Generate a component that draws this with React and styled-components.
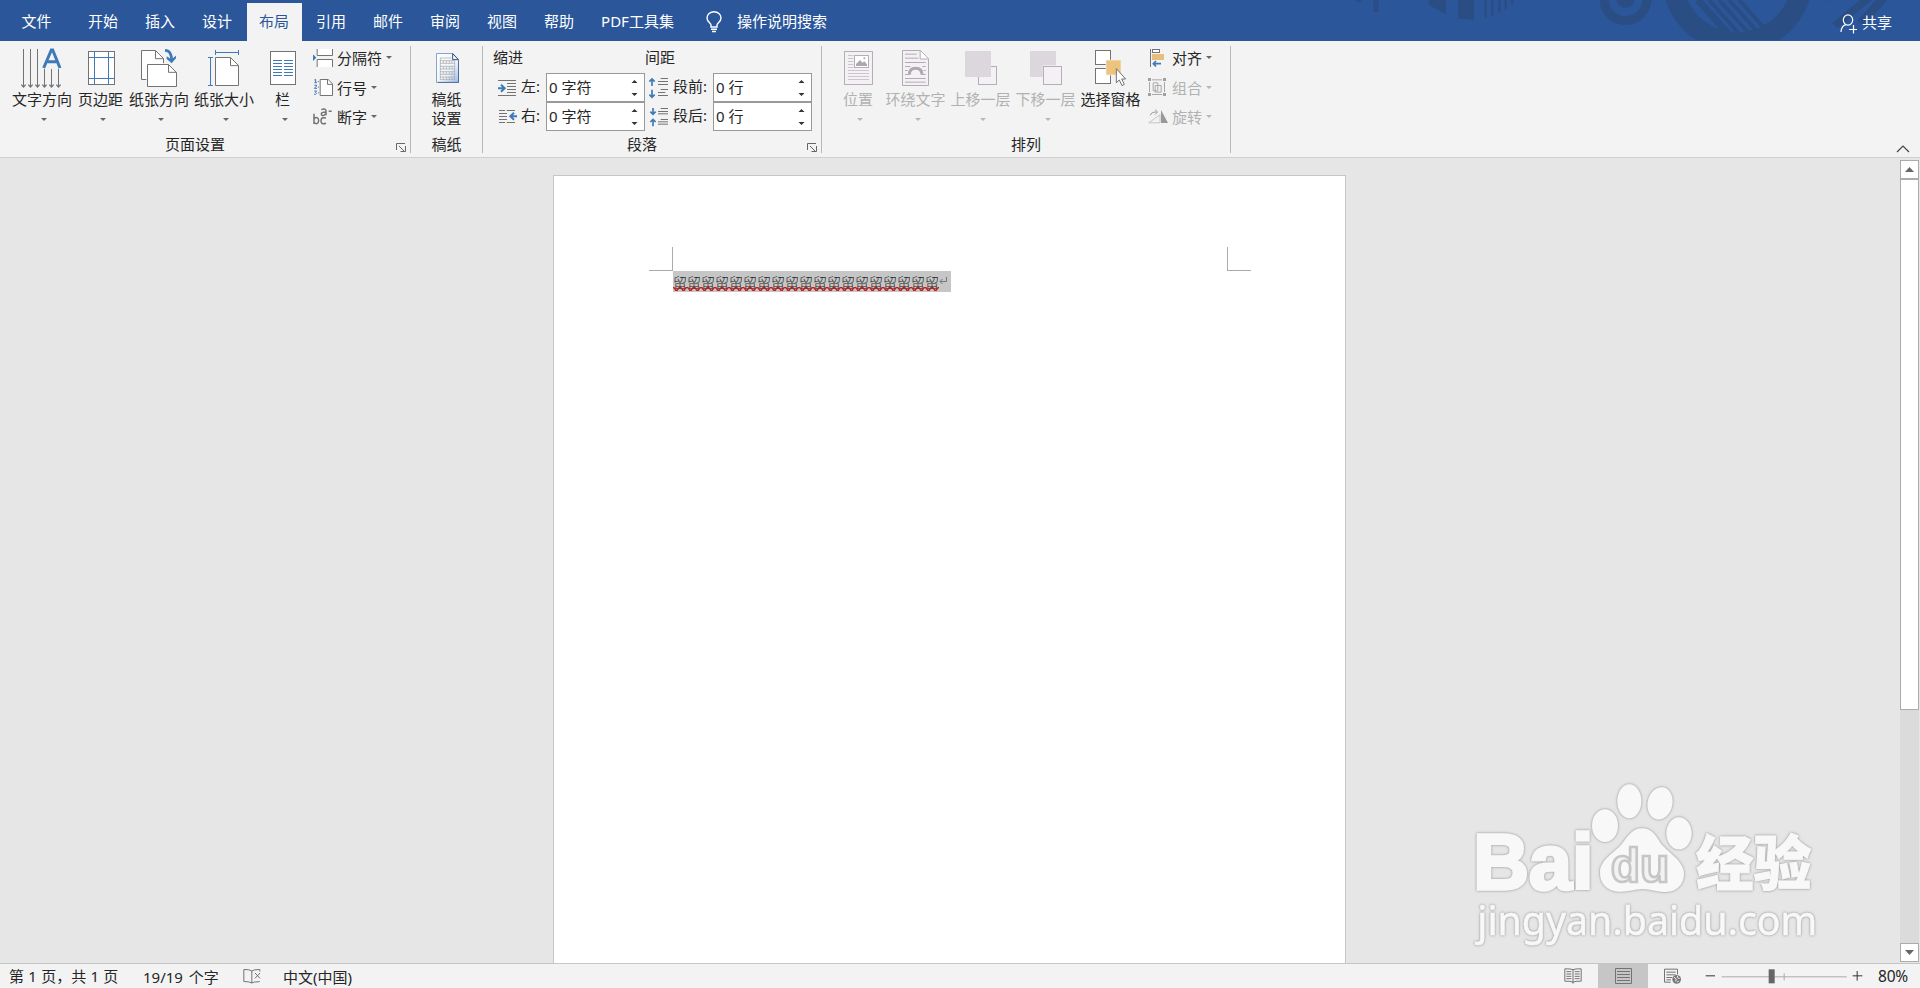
import React from "react";
import styled, { createGlobalStyle, css } from "styled-components";

const Global = createGlobalStyle`
  * { box-sizing: border-box; }
  body {
    margin: 0;
    overflow: hidden;
    font-family: "Noto Sans", "Noto Sans CJK SC", sans-serif;
    font-size: 15px;
    color: #262626;
  }
  svg { display: block; flex: none; }
`;

const Window = styled.div`
  position: relative;
  display: flex;
  flex-direction: column;
  width: 1920px;
  height: 988px;
  background: #e6e6e6;
  overflow: hidden;
`;

/* ---------- title tabs ---------- */
const TabBar = styled.header`
  position: relative;
  display: flex;
  height: 41px;
  flex: none;
  padding-top: 3px;
  background: #2b579a;
  color: #fff;
`;
const Decor = styled.svg`
  position: absolute;
  right: 0;
  top: 0;
`;
const Tab = styled.div`
  width: ${(p) => p.$w || 55}px;
  margin-right: 2px;
  height: 38px;
  line-height: 37px;
  text-align: center;
  white-space: nowrap;
  padding-right: 1px;
  ${(p) => p.$active && css`background: #f3f3f3; color: #2b579a;`}
`;
const FileTab = styled(Tab)`
  width: 74px;
  line-height: 36px;
`;
const TellMe = styled.div`
  display: flex;
  gap: 15px;
  line-height: 37px;
  margin-left: 17px;
  svg { margin-top: 8px; }
`;
const Share = styled.div`
  position: relative;
  display: flex;
  gap: 5px;
  margin-left: auto;
  margin-right: 28px;
  line-height: 38px;
  svg { margin-top: 11px; }
`;

/* ---------- ribbon ---------- */
const Ribbon = styled.section`
  position: relative;
  display: flex;
  height: 117px;
  flex: none;
  padding: 5px 0 4px;
  background: #f3f3f3;
  border-bottom: 1px solid #d0d0d0;
`;
const Group = styled.div`
  position: relative;
  display: flex;
  flex-direction: column;
  justify-content: space-between;
  width: ${(p) => p.$w}px;
  border-right: 1px solid #b8b8b8;
`;
const GroupBody = styled.div`
  display: flex;
  height: 88px;
  padding-left: ${(p) => p.$pad || 0}px;
`;
const Caption = styled.div`
  height: 18px;
  line-height: 18px;
  text-align: center;
  padding-right: ${(p) => p.$shift || 0}px;
`;
const Launcher = styled.svg`
  position: absolute;
  right: 4px;
  bottom: 1px;
`;
const BigButtonBox = styled.div`
  display: flex;
  flex-direction: column;
  align-items: center;
  width: ${(p) => p.$w}px;
  white-space: nowrap;
  color: ${(p) => (p.$off ? "#b1b1b1" : "#262626")};
`;
const IconSlot = styled.div`
  height: 43px;
  padding-top: ${(p) => p.$top}px;
  margin-left: ${(p) => p.$dx || 0}px;
`;
const BigLabel = styled.div`
  line-height: 19px;
  padding-top: 1px;
  text-align: center;
  height: ${(p) => (p.$two ? 39 : 29)}px;
`;
const Caret = styled.i`
  width: 0;
  height: 0;
  flex: none;
  border: 3px solid transparent;
  border-bottom: 0;
  border-top-color: ${(p) => (p.$off ? "#b8b8b8" : "#666")};
  margin-left: 4px;
`;
const SmallColumn = styled.div`
  display: flex;
  flex-direction: column;
  margin-top: -3px;
  padding-left: ${(p) => p.$pad}px;
`;
const SmallButtonBox = styled.div`
  display: flex;
  align-items: center;
  height: 29.400px;
  white-space: nowrap;
  color: ${(p) => (p.$off ? "#b1b1b1" : "#262626")};
`;
const SmallIcon = styled.div`
  width: 24px;
`;
const Collapse = styled.svg`
  position: absolute;
  right: 10px;
  bottom: 4px;
`;

/* ---------- paragraph fields ---------- */
const FieldColumn = styled.div`
  width: ${(p) => p.$w}px;
`;
const FieldHead = styled.div`
  height: 27px;
  line-height: 23px;
`;
const Field = styled.label`
  display: flex;
  align-items: center;
  height: 29px;
  padding-left: 4px;
`;
const FieldName = styled.span`
  width: ${(p) => p.$w}px;
  padding-left: 4px;
  line-height: 27px;
  height: 29px;
  white-space: nowrap;
`;
const Spin = styled.span`
  display: flex;
  justify-content: space-between;
  align-items: center;
  width: 99px;
  height: 29px;
  padding: 0 6px 0 2px;
  border: 1px solid #999;
  background: #fff;
  line-height: 27px;
`;

/* ---------- document ---------- */
const Workspace = styled.main`
  display: flex;
  flex: 1;
  min-height: 0;
`;
const Canvas = styled.div`
  width: 1900px;
  padding: 17px 0 0 553px;
`;
const Page = styled.article`
  width: 793px;
  height: 100%;
  padding: 71px 94px 0 95px;
  border: 1px solid #c6c6c6;
  border-bottom: 0;
  background: #fff;
`;
const Marks = styled.div`
  display: flex;
  justify-content: space-between;
`;
const Mark = styled.div`
  width: 24px;
  height: 24px;
  border-bottom: 1px solid #ababab;
  border-right: ${(p) => (p.$end ? 0 : "1px solid #ababab")};
  border-left: ${(p) => (p.$end ? "1px solid #ababab" : 0)};
`;
const Selection = styled.div`
  position: relative;
  display: flex;
  width: 278px;
  height: 21px;
  margin-left: 24px;
  background: #c6c6c6;
  font-family: "Noto Sans CJK SC", sans-serif;
  font-weight: 300;
  font-size: 14px;
  line-height: 23px;
  white-space: nowrap;
  overflow: hidden;
`;
const Wave = styled.svg`
  position: absolute;
  left: 0;
  top: 16px;
`;
const Return = styled.svg`
  margin: 5px 0 0 0;
`;
const ScrollBar = styled.aside`
  display: flex;
  flex-direction: column;
  width: 19px;
  margin: 2px 1px 1px 0;
  background: #dbdbdb;
`;
const ScrollButton = styled.div`
  display: flex;
  align-items: center;
  justify-content: center;
  height: 19px;
  flex: none;
  border: 1px solid #ababab;
  background: #fff;
`;
const Thumb = styled.div`
  height: 531px;
  border: 1px solid #ababab;
  background: #fff;
  margin-bottom: auto;
`;

/* ---------- status bar ---------- */
const StatusBar = styled.footer`
  display: flex;
  align-items: center;
  height: 25px;
  flex: none;
  border-top: 1px solid #c6c6c6;
  background: #f3f3f3;
  line-height: 24px;
  white-space: nowrap;
`;
const StatusItem = styled.div`
  width: ${(p) => p.$w}px;
  padding-left: ${(p) => p.$pad || 0}px;
  padding-top: ${(p) => p.$down || 0}px;
  word-spacing: ${(p) => p.$gap || 0}px;
`;
const ViewButton = styled.div`
  display: flex;
  align-items: center;
  justify-content: center;
  width: 50px;
  height: 24px;
  background: ${(p) => (p.$active ? "#c6c6c6" : "transparent")};
`;
const Views = styled.div`
  display: flex;
  margin-left: auto;
`;
const ZoomSlider = styled.div`
  margin-left: 5px;
`;
const ZoomValue = styled.div`
  width: 42px;
  margin-left: 13px;
  font-size: 15.500px;
  letter-spacing: -0.200px;
`;
const Watermark = styled.svg`
  position: absolute;
  left: 1465px;
  top: 775px;
`;

/* Icons use three units per pixel. */
const Ico = ({ x, y, w, h, children }) => (
  <svg width={w / 3} height={h / 3} viewBox={`${x} ${y} ${w} ${h}`} fill="none" stroke="#737373" strokeWidth="3">
    {children}
  </svg>
);
const B = "#3f7ab8";

const TextDirectionIcon = () => (
  <Ico x={66} y={144} w={126} h={123}>
    <path d="M73.500 147v111M94.500 147v111M115.500 147v111M136.500 207v51M157.500 207v51M178.500 207v51" />
    <path strokeWidth="4" d="M67 254l6.500 7 6.500-7M88 254l6.500 7 6.500-7M109 254l6.500 7 6.500-7M130 254l6.500 7 6.500-7M151 254l6.500 7 6.500-7M172 254l6.500 7 6.500-7" />
    <path stroke={B} strokeWidth="9" d="M134 204L157 150h4l22 54M142 185h33" />
  </Ico>
);
const MarginsIcon = () => (
  <Ico x={264} y={153} w={81} h={102}>
    <rect x="265.500" y="154.500" width="78" height="99" fill="#fff" />
    <path stroke={B} d="M283.500 156v96M325.500 156v96M267 172.500h75M267 235.500h75" />
  </Ico>
);
const OrientationIcon = () => (
  <Ico x={423} y={144} w={111} h={120}>
    <path fill="#fff" d="M439 238.500h-14.500v-87h42l24 24v14" />
    <path d="M466.500 152v24h24" />
    <path fill="#fff" d="M442.500 193.500h63l24 24v42h-87z" />
    <path d="M505.500 194v23h24" />
    <path stroke={B} strokeWidth="8" d="M495 151c15 0 20 12 20 32" />
    <path fill={B} stroke="none" d="M500 169l14 9 14-11v8l-13 15-15-13z" />
  </Ico>
);
const SizeIcon = () => (
  <Ico x={624} y={150} w={96} h={111}>
    <path stroke={B} d="M646.500 150v15M715.500 150v15M646 157.500h69M624 172.500h15M624 256.500h15M631.500 172v84" />
    <path fill="#fff" d="M646.500 172.500h45l24 24v60h-69z" />
    <path d="M691.500 173v24h24" />
  </Ico>
);
const ColumnsIcon = () => (
  <Ico x={810} y={153} w={78} h={102}>
    <rect x="811.500" y="154.500" width="75" height="99" fill="#fff" />
    <path stroke={B} d="M819 181.500h27m6 0h27M819 190.500h27m6 0h27M819 199.500h27m6 0h27M819 208.500h27m6 0h27M819 217.500h27m6 0h27M819 226.500h27m6 0h27" />
  </Ico>
);
const BreaksIcon = () => (
  <Ico x={939} y={144} w={60} h={60}>
    <path fill="#fff" d="M951.500 147v19.500h46V147M951.500 201v-22.500h46V201" />
    <path fill={B} stroke="none" d="M939 163l10 10-10 10z" />
  </Ico>
);
const LineNumbersIcon = () => (
  <Ico x={939} y={231} w={60} h={57}>
    <path fill="#fff" d="M960.500 235.500h24l13 13v35h-37z" />
    <path d="M982.500 236v14h15" />
    <path stroke={B} d="M943 237l4-2v10M943 245h8M943 253q8-3 7 2l-7 7h8M943 270h7l-4 4q7 3 0 6h-4M955 240v3M955 257v3M955 274v3" />
  </Ico>
);
const HyphenIcon = () => (
  <Ico x={939} y={321} w={60} h={57}>
    <g strokeWidth="4.500">
      <path d="M942 341v31M942 358q3-7 9-5 5 2 5 9t-6 9q-6 0-8-5M978 354q-15-4-15 8 0 13 15 8M964 329q11-5 14 3v14M978 336q-14 0-14 6t8 4l6-5M986 334h9" />
    </g>
  </Ico>
);
const ManuscriptIcon = () => (
  <Ico x={105} y={156} w={75} h={96}>
    <defs>
      <linearGradient id="sheet" x1="0" y1="0" x2="1" y2="1">
        <stop offset="0" stopColor="#fff" />
        <stop offset=".6" stopColor="#eef4fc" />
        <stop offset="1" stopColor="#9dbdec" />
      </linearGradient>
    </defs>
    <path fill="url(#sheet)" stroke="#8ba3c7" d="M109.500 160.500h49l17 18v69h-66z" />
    <path stroke="#4c6c9c" d="M175.500 181v66h-62" />
    <path fill="#fff" stroke="#2c4c80" d="M158 161v18h17z" />
    <path stroke="#a4a4a4" strokeWidth="2" d="M120 174h34M120 182h45M120 190h45M120 199h45M120 207h45M120 215h45M120 223h45M120 231h45M120 239h45M121 174v65M164 182v57" />
    <path stroke="#a4a4a4" strokeWidth="2" d="M130 182v8m9-8v8m9-8v8m8-8v8M130 199v8m9-8v8m9-8v8m8-8v8M130 215v8m9-8v8m9-8v8m8-8v8M130 231v8m9-8v8m9-8v8m8-8v8" />
  </Ico>
);
const IndentLeftIcon = () => (
  <Ico x={291} y={234} w={60} h={54}>
    <path d="M294 238.500h54M321 247.500h27M321 256.500h27M321 265.500h27M321 274.500h27M294 283.500h54" />
    <path stroke={B} strokeWidth="6" d="M294 261.500h20M303 251l11 10.500-11 10.500" />
  </Ico>
);
const IndentRightIcon = () => (
  <Ico x={291} y={321} w={60} h={54}>
    <path d="M297 328.500h18m5 0h25M297 337.500h24M297 346.500h24M297 355.500h24M297 364.500h18m5 0h25" />
    <path stroke={B} strokeWidth="6" d="M351 345.500h-20M342 335l-11 10.500 11 10.500" />
  </Ico>
);
const SpaceBeforeIcon = () => (
  <Ico x={747} y={228} w={60} h={66}>
    <path d="M782 232.500h22M774 241.500h30M774 250.500h30M782 265.500h22M774 274.500h22M774 283.500h30" />
    <path stroke={B} strokeWidth="5" d="M756 255v-20M748 242l8-8 8 8M756 266v22M748 281l8 8 8-8" />
  </Ico>
);
const SpaceAfterIcon = () => (
  <Ico x={747} y={318} w={60} h={60}>
    <path d="M782 322.500h22M774 331.500h30M774 338.500h30M782 355.500h22M774 362.500h30M774 369.500h30" />
    <path stroke={B} strokeWidth="5" d="M759 321v18M751 332l8 8 8-8M759 376v-19M751 363l8-8 8 8" />
  </Ico>
);
const PositionIcon = () => (
  <Ico x={72} y={153} w={87} h={102}>
    <g stroke="#b3b0b3">
      <rect x="73.500" y="154.500" width="84" height="99" fill="#f5f0f5" />
      <path stroke="#cbc8cb" d="M84 166.500h16M84 175.500h16M84 184.500h16M84 193.500h16M84 202.500h16M84 211.500h63M84 220.500h63M84 229.500h63M84 238.500h63" />
      <rect x="103.500" y="166.500" width="42" height="36" fill="#fff" />
      <path fill="#aaa" stroke="none" d="M108 198v-6l12-12 8 8 5-4 8 9v5z" />
      <circle cx="133" cy="175" r="3" fill="#aaa" stroke="none" />
    </g>
  </Ico>
);
const WrapIcon = () => (
  <Ico x={249} y={150} w={81} h={108}>
    <g stroke="#b0adb0">
      <path fill="#f5f0f5" d="M250.500 151.500h54l24 24v81h-78z" />
      <path fill="#fff" d="M303.500 152v25h25" />
      <path d="M258 162.500h35M258 174.500h40M258 187.500h62M258 199.500h16m36 0h10M258 211.500h8m48 0h6M258 223.500h10m42 0h10M258 235.500h62M258 246.500h62" />
      <path strokeWidth="9" stroke="#aaa" d="M271 224q0-19 19-19t19 19" />
    </g>
  </Ico>
);
const ForwardIcon = () => (
  <Ico x={435} y={153} w={96} h={102}>
    <rect x="475.500" y="199.500" width="54" height="54" fill="#f5f0f5" stroke="#b3b0b3" />
    <rect x="435" y="153" width="78" height="78" fill="#dcd7dc" stroke="none" />
  </Ico>
);
const BackwardIcon = () => (
  <Ico x={630} y={153} w={96} h={102}>
    <rect x="630" y="153" width="78" height="78" fill="#dcd7dc" stroke="none" />
    <rect x="668" y="196" width="58" height="58" fill="#f3f3f3" stroke="none" />
    <rect x="670.500" y="199.500" width="54" height="54" fill="#f5f0f5" stroke="#b3b0b3" />
  </Ico>
);
const SelectionPaneIcon = () => (
  <Ico x={825} y={150} w={96} h={111}>
    <rect x="826.500" y="151.500" width="45" height="42" fill="#fff" />
    <rect x="826.500" y="205.500" width="45" height="45" fill="#fff" />
    <rect x="858" y="180" width="45" height="45" fill="#ecc47c" stroke="#f3f3f3" strokeWidth="2" />
    <path fill="#fff" strokeWidth="3" d="M889 206v42l9-8 8 17 7-4-8-16h12z" />
  </Ico>
);
const AlignIcon = () => (
  <Ico x={987} y={144} w={54} h={60}>
    <path d="M994.500 147v54" />
    <rect x="1000.500" y="148.500" width="21" height="9" fill="#fff" />
    <rect x="999" y="162" width="36" height="18" fill="#e9bd7c" stroke="none" />
    <path stroke={B} strokeWidth="5" d="M1026 191h-22M1011 183l-8 8 8 8" />
  </Ico>
);
const GroupIcon = () => (
  <Ico x={987} y={231} w={57} h={60}>
    <g stroke="#a8a8a8">
      <path d="M999 239.500h30M999 283.500h30M991.500 246v30M1036.500 246v30" />
      <path d="M1002.500 248.500h14v24h-14zM1008.500 256.500h18v20h-18z" />
      <path fill="#a0a0a0" stroke="none" d="M987 234h9v9h-9zM1032 234h9v9h-9zM987 279h9v9h-9zM1032 279h9v9h-9z" />
    </g>
  </Ico>
);
const RotateIcon = () => (
  <Ico x={984} y={321} w={60} h={57}>
    <g stroke="#b0b0b0">
      <path d="M986 368.500h34v-24z" fill="#f5f0f5" stroke="#c8c4c8" />
      <path fill="#999" stroke="none" d="M1023 330v39h21z" />
      <path d="M991 346q2-10 18-10M1005 329l8 7-8 8" stroke="#999" />
    </g>
  </Ico>
);
const DialogLauncher = () => (
  <Launcher width="10" height="9" viewBox="0 0 10 9" fill="none" stroke="#666">
    <path d="M.5 7V.5H9M3 3l5 5M9.500 3v5.500H4.500" />
  </Launcher>
);
const SpinArrows = () => (
  <svg width="7" height="18" viewBox="0 0 7 18" fill="#333">
    <path d="M.5 4L3.500 1l3 3zM.5 14h6l-3 3z" />
  </svg>
);

const BigButton = ({ w, icon, top = 4, dx, label, caret = true, off, two }) => (
  <BigButtonBox $w={w} $off={off}>
    <IconSlot $top={top} $dx={dx}>{icon}</IconSlot>
    <BigLabel $two={two}>{label}</BigLabel>
    {caret && <Caret $off={off} />}
  </BigButtonBox>
);
const SmallButton = ({ icon, label, off }) => (
  <SmallButtonBox $off={off}>
    <SmallIcon>{icon}</SmallIcon>
    {label}
    <Caret $off={off} />
  </SmallButtonBox>
);
const SpinField = ({ icon, name, nameW, value }) => (
  <Field>
    {icon}
    <FieldName $w={nameW}>{name}</FieldName>
    <Spin>
      {value}
      <SpinArrows />
    </Spin>
  </Field>
);

const HeaderArt = () => (
  <Decor width="600" height="41" viewBox="1320 0 600 41" fill="#2a4d84">
    <defs>
      <clipPath id="disc"><circle cx="1737.500" cy="-23" r="55" /></clipPath>
      <clipPath id="strip"><rect x="1320" y="0" width="600" height="40" /></clipPath>
    </defs>
    <g clipPath="url(#strip)">
      <path d="M1356 0h5v2h-5zM1373.500 0h5v12h-5zM1429 0h17v14.500L1429 5zM1458 0h16v20l-16-1.500zM1484.500 0h2.500v17.500l-2.500.5zM1491 0h2.500v15.500l-2.500.5zM1498 0h2.500v12l-2.500 1zM1504.500 0h2.500v9l-2.500 1.500zM1511 0h2.500v4l-2.500 1.500z" />
      <circle cx="1625.500" cy="-1" r="26" />
      <circle cx="1625.500" cy="-1" r="17" fill="#2b579a" />
      <circle cx="1625.500" cy="-1" r="9" />
      <circle cx="1737.500" cy="-23" r="75.500" />
      <circle cx="1737.500" cy="-23" r="55" fill="#2b579a" />
      <g clipPath="url(#disc)" stroke="#2a4d84" strokeWidth="4">
        <path strokeWidth="7" d="M1698 0l34 38" />
        <path d="M1709 0l34 38M1719 0l34 38M1729 0l34 38M1739 0l34 38" />
      </g>
      <path d="M1860 0h12l-34 28-6-5zM1876 0h11l-22 26-8-5zM1827 0h4l-2 1z" />
    </g>
  </Decor>
);

const BaiduMark = () => (
  <Watermark width="365" height="185" viewBox="75 45 1095 555">
    <defs>
      <filter id="edge" x="-5%" y="-5%" width="110%" height="110%">
        <feDropShadow dx="0" dy="0" stdDeviation="3.500" floodColor="#9c9c9c" floodOpacity="1" />
        <feDropShadow dx="0" dy="0" stdDeviation="3" floodColor="#b8b8b8" floodOpacity=".6" />
      </filter>
    </defs>
    <g fill="#f8f8f8" filter="url(#edge)">
      <text x="100" y="388" fontFamily="Liberation Sans, sans-serif" fontWeight="700" fontSize="234" textLength="360" lengthAdjust="spacingAndGlyphs" stroke="#f8f8f8" strokeWidth="10">Bai</text>
      <ellipse cx="495" cy="197" rx="39" ry="49" />
      <ellipse cx="568" cy="124" rx="36" ry="51" />
      <ellipse cx="660" cy="130" rx="37" ry="49" transform="rotate(12 660 130)" />
      <ellipse cx="717" cy="220" rx="38" ry="48" />
      <path d="M606 205c28 0 40 19 55 43 16 24 72 54 71 93 0 36-27 56-60 55-22-1-43-10-66-9-24 1-42 9-68 8-37-1-59-24-58-59 1-38 43-57 66-85 19-24 32-46 60-46z" />
      <text x="768" y="374" fontFamily="Noto Sans CJK SC, sans-serif" fontWeight="900" fontSize="178" textLength="346" lengthAdjust="spacingAndGlyphs" stroke="#f8f8f8" strokeWidth="3">经验</text>
      <text x="112" y="526" fontFamily="Noto Sans, sans-serif" fontSize="119" textLength="1020" lengthAdjust="spacingAndGlyphs" stroke="#f8f8f8" strokeWidth="1.500">jingyan.baidu.com</text>
    </g>
    <text x="512" y="365" fontFamily="Liberation Sans, sans-serif" fontWeight="700" fontSize="144" textLength="176" lengthAdjust="spacingAndGlyphs" fill="#f2f2f2" stroke="#c6c6c6" strokeWidth="8">du</text>
  </Watermark>
);

export default function App() {
  return (
    <Window>
      <Global />
      <TabBar>
        <HeaderArt />
        <FileTab>文件</FileTab>
        <Tab>开始</Tab>
        <Tab>插入</Tab>
        <Tab>设计</Tab>
        <Tab $active>布局</Tab>
        <Tab>引用</Tab>
        <Tab>邮件</Tab>
        <Tab>审阅</Tab>
        <Tab>视图</Tab>
        <Tab>帮助</Tab>
        <Tab $w={98}>PDF工具集</Tab>
        <TellMe>
          <svg width="16" height="22" viewBox="0 0 16 22" fill="none" stroke="#fff" strokeWidth="1.400">
            <path d="M5 16v-2C5 12 1 11 1 7a7 6.300 0 0 1 14 0c0 4-4 5-4 7v2zM5 18.300h6M6 20.500h4" />
          </svg>
          操作说明搜索
        </TellMe>
        <Share>
          <svg width="17" height="20" viewBox="0 0 17 20" fill="none" stroke="#fff" strokeWidth="1.200">
            <ellipse cx="8" cy="6" rx="4.700" ry="5.200" />
            <path d="M1 18c.2-4 2-6.500 5-7.300M9 15.500h8M13.500 11v8.500" />
          </svg>
          共享
        </Share>
      </TabBar>

      <Ribbon>
        <Group $w={411}>
          <GroupBody $pad={9}>
            <BigButton w={66} top={2} icon={<TextDirectionIcon />} label="文字方向" />
            <BigButton w={51} top={5} dx={2} icon={<MarginsIcon />} label="页边距" />
            <BigButton w={66} top={2} icon={<OrientationIcon />} label="纸张方向" />
            <BigButton w={64} top={4} icon={<SizeIcon />} label="纸张大小" />
            <BigButton w={53} top={5} icon={<ColumnsIcon />} label="栏" />
            <SmallColumn $pad={4}>
              <SmallButton icon={<BreaksIcon />} label="分隔符" />
              <SmallButton icon={<LineNumbersIcon />} label="行号" />
              <SmallButton icon={<HyphenIcon />} label="断字" />
            </SmallColumn>
          </GroupBody>
          <Caption $shift={20}>页面设置</Caption>
          <DialogLauncher />
        </Group>

        <Group $w={72}>
          <GroupBody>
            <BigButton w={72} top={6} dx={2} two caret={false} icon={<ManuscriptIcon />} label={<>稿纸<br />设置</>} />
          </GroupBody>
          <Caption>稿纸</Caption>
        </Group>

        <Group $w={339}>
          <GroupBody $pad={10}>
            <FieldColumn $w={152}>
              <FieldHead>缩进</FieldHead>
              <SpinField icon={<IndentLeftIcon />} name="左:" nameW={29} value="0 字符" />
              <SpinField icon={<IndentRightIcon />} name="右:" nameW={29} value="0 字符" />
            </FieldColumn>
            <FieldColumn $w={170}>
              <FieldHead>间距</FieldHead>
              <SpinField icon={<SpaceBeforeIcon />} name="段前:" nameW={44} value="0 行" />
              <SpinField icon={<SpaceAfterIcon />} name="段后:" nameW={44} value="0 行" />
            </FieldColumn>
          </GroupBody>
          <Caption $shift={20}>段落</Caption>
          <DialogLauncher />
        </Group>

        <Group $w={409}>
          <GroupBody $pad={11}>
            <BigButton off w={50} top={5} icon={<PositionIcon />} label="位置" />
            <BigButton off w={65} top={4} icon={<WrapIcon />} label="环绕文字" />
            <BigButton off w={65} top={5} icon={<ForwardIcon />} label="上移一层" />
            <BigButton off w={65} top={5} icon={<BackwardIcon />} label="下移一层" />
            <BigButton w={65} top={4} caret={false} icon={<SelectionPaneIcon />} label="选择窗格" />
            <SmallColumn $pad={5}>
              <SmallButton icon={<AlignIcon />} label="对齐" />
              <SmallButton off icon={<GroupIcon />} label="组合" />
              <SmallButton off icon={<RotateIcon />} label="旋转" />
            </SmallColumn>
          </GroupBody>
          <Caption>排列</Caption>
        </Group>
        <Collapse width="14" height="8" viewBox="0 0 14 8" fill="none" stroke="#444" strokeWidth="1.200">
          <path d="M1 7l6-6 6 6" />
        </Collapse>
      </Ribbon>

      <Workspace>
        <Canvas>
          <Page>
            <Marks>
              <Mark />
              <Mark $end />
            </Marks>
            <Selection>
              {"留".repeat(19)}
              <Return width="9" height="10" viewBox="0 0 9 10" fill="none" stroke="#777">
                <path d="M7.500 1v4.500H1M3.500 3L1 5.500 3.500 8" />
              </Return>
              <Wave width="268" height="4" viewBox="0 0 268 4" fill="none" stroke="#cc1414" strokeWidth="1.300">
                <path d={"M0 .5" + "q1.500 0 2 1.500t1.500 1.500 1.500-1.500 2-1.500".repeat(38)} />
              </Wave>
            </Selection>
          </Page>
        </Canvas>
        <ScrollBar>
          <ScrollButton>
            <svg width="9" height="5" viewBox="0 0 9 5" fill="#666"><path d="M0 5l4.500-5L9 5z" /></svg>
          </ScrollButton>
          <Thumb />
          <ScrollButton>
            <svg width="9" height="5" viewBox="0 0 9 5" fill="#666"><path d="M0 0l4.500 5L9 0z" /></svg>
          </ScrollButton>
        </ScrollBar>
      </Workspace>

      <StatusBar>
        <StatusItem $w={143} $pad={9} $gap={0.4}>第 1 页，共 1 页</StatusItem>
        <StatusItem $w={100} $down={2} $gap={2}>19/19 个字</StatusItem>
        <StatusItem $w={40}>
          <Ico x={727} y={55} w={57} h={48}>
            <path d="M753.500 64q-6-5-24-4.500v36q18 0 24 4.500zM753.500 64q6-5 24-4.500v6M777 96q-18 0-24 4M763 70l15 16M778 70l-15 16" />
          </Ico>
        </StatusItem>
        <StatusItem $w={100} $down={2}>中文(中国)</StatusItem>
        <Views>
          <ViewButton>
            <Ico x={74} y={56} w={54} h={48}>
              <path d="M101 61q-6-3-24.500-2.500v37q18-.5 24.500 3 6-3.500 24.500-3v-37Q107 58 101 61zv42M81 67h15M81 74h15M81 81h15M81 88h15M106 67h15M106 74h15M106 81h15M106 88h15" />
            </Ico>
          </ViewButton>
          <ViewButton $active>
            <Ico x={225} y={57} w={51} h={48}>
              <path d="M226.500 58.500h48v45h-48zM231 67.500h39M231 76.500h39M231 85.500h39M231 94.500h39" />
            </Ico>
          </ViewButton>
          <ViewButton>
            <Ico x={378} y={57} w={54} h={48}>
              <path d="M398 99.500h-18.500v-39h39v16M385 69.500h28M385 77.500h28M385 85.500h18M385 92.500h14" />
              <circle cx="416" cy="91" r="13" fill="#777" stroke="none" />
              <path stroke="#eee" d="M407 84l8 6-2 8M419 80l-1 6 7 3M422 97l-5 2" />
            </Ico>
          </ViewButton>
        </Views>
        <ZoomSlider>
          <Ico x={490} y={56} w={486} h={48}>
            <path stroke="#333" d="M498 79.500h28M939 79.500h29M952.500 65v29" />
            <path stroke="#ababab" d="M546 82.500h375M733.500 72v21" />
            <rect x="687" y="60" width="18" height="42" fill="#666" stroke="none" />
          </Ico>
        </ZoomSlider>
        <ZoomValue>80%</ZoomValue>
      </StatusBar>
      <BaiduMark />
    </Window>
  );
}
